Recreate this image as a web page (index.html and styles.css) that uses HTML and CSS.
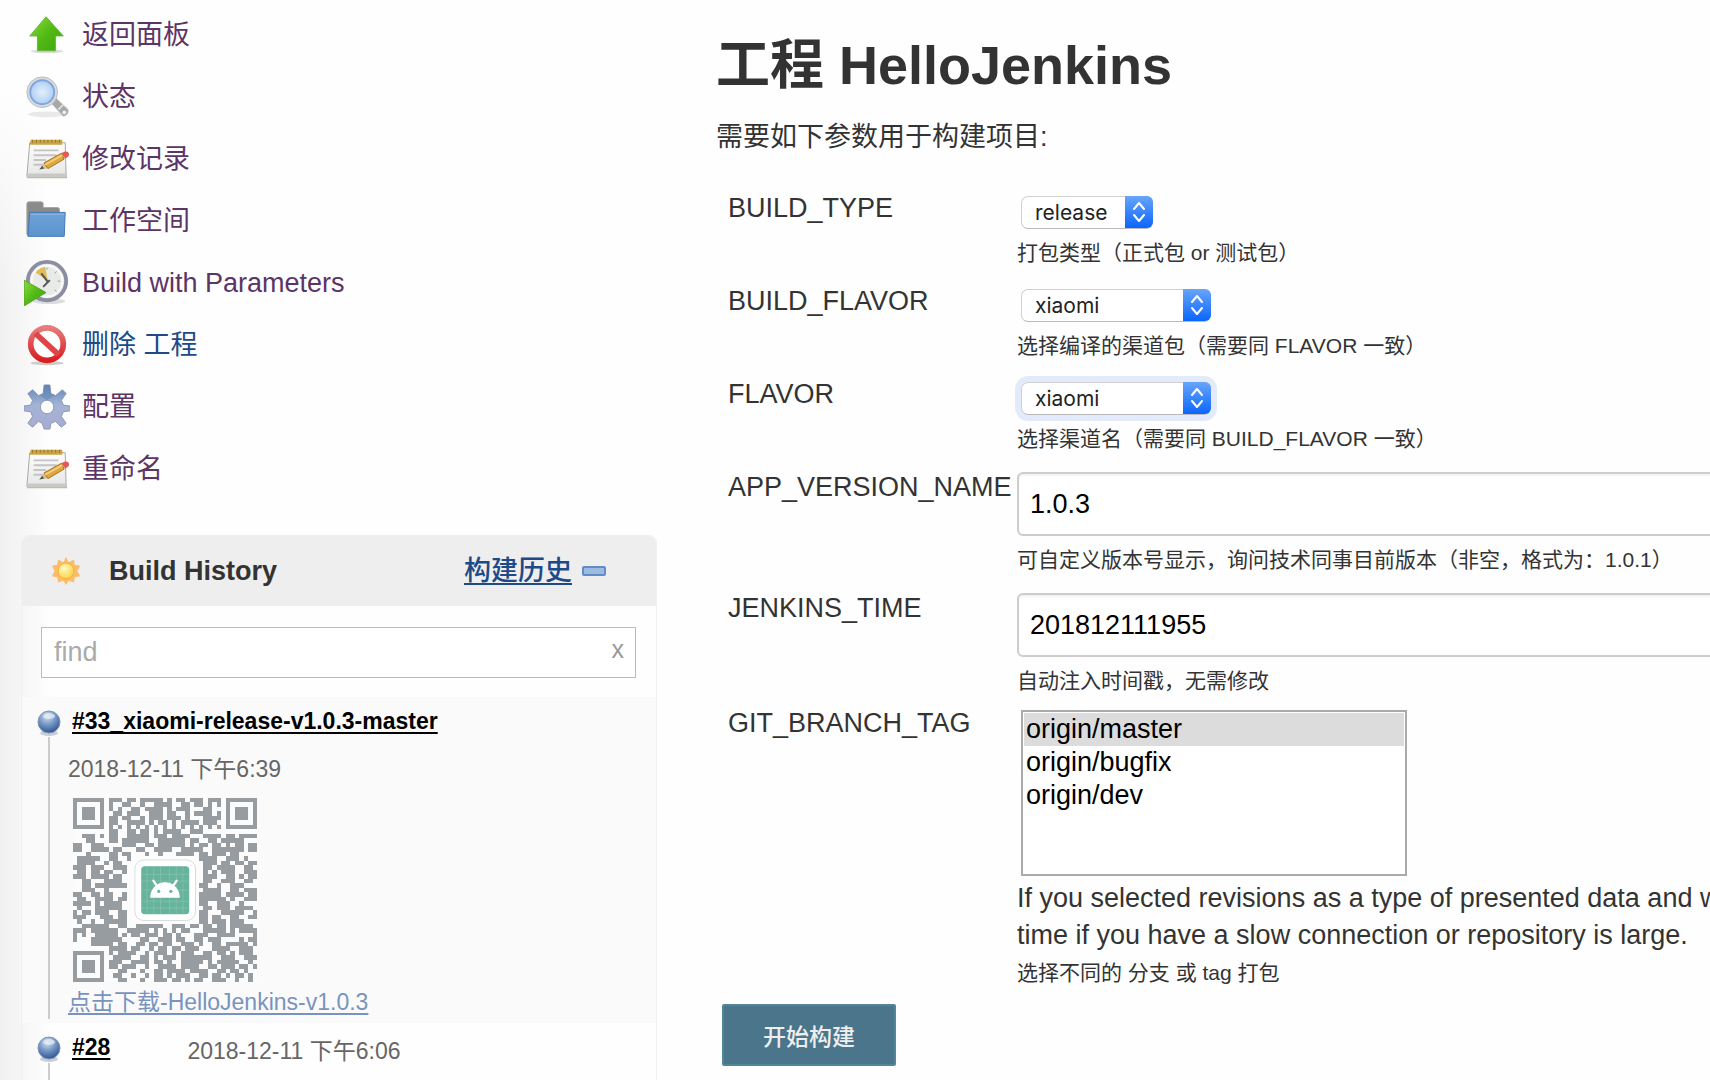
FILE: index.html
```html
<!DOCTYPE html>
<html lang="zh-CN">
<head>
  <meta charset="UTF-8" />
  <meta name="viewport" content="width=device-width, initial-scale=1.0"/>
  <title>HelloJenkins [Jenkins]</title>
  <link rel="stylesheet" href="styles.css">
</head>
<body>
  <svg class="defs" aria-hidden="true">
    <defs>
      <linearGradient id="green" x1="0" y1="0" x2="1" y2="1"><stop offset="0" stop-color="#8fdc3c"/><stop offset=".5" stop-color="#52ba16"/><stop offset="1" stop-color="#3fa30c"/></linearGradient>
      <linearGradient id="folder" x1="0" y1="0" x2="0" y2="1"><stop offset="0" stop-color="#6fa3d8"/><stop offset="1" stop-color="#5b93cd"/></linearGradient>
      <linearGradient id="red" x1="0" y1="0" x2="0" y2="1"><stop offset="0" stop-color="#e87b7b"/><stop offset="1" stop-color="#d81f22"/></linearGradient>
      <linearGradient id="gear" x1="0" y1="0" x2="0" y2="1"><stop offset="0" stop-color="#5f86b8"/><stop offset=".45" stop-color="#a3b3d6"/><stop offset="1" stop-color="#a9acd2"/></linearGradient>
      <linearGradient id="paper" x1="0" y1="0" x2="0" y2="1"><stop offset="0" stop-color="#fdfdfd"/><stop offset="1" stop-color="#e6e6e6"/></linearGradient>
      <radialGradient id="lens" cx=".5" cy=".5" r=".6"><stop offset="0" stop-color="#e3f0fc"/><stop offset="1" stop-color="#a5c8f0"/></radialGradient>
      <radialGradient id="orb" cx=".42" cy=".25" r=".75"><stop offset="0" stop-color="#d5e2f0"/><stop offset=".45" stop-color="#7f9fcb"/><stop offset="1" stop-color="#2f5594"/></radialGradient>
      <radialGradient id="sun" cx=".4" cy=".35" r=".7"><stop offset="0" stop-color="#fffac0"/><stop offset="1" stop-color="#fbd142"/></radialGradient>
      <symbol id="icon-notepad" viewBox="0 0 48 48">
        <path d="M3 44h42v-2H3z" fill="#b9b9b4"/>
        <path d="M6 7h37l1 35H3z" fill="url(#paper)" stroke="#a5a5a0"/>
        <path d="M3 39h41v4H3z" fill="#c9c9c4"/>
        <path d="M7 4h33v5H6z" fill="#c9a545"/>
        <path d="M9 4v3m4-3v3m4-3v3m4-3v3m4-3v3m4-3v3m4-3v3m4-3v3" stroke="#917429"/>
        <path d="M10 15h26M10 20h24M10 25h13M10 30h11" stroke="#c4c4c4" stroke-width="2"/>
        <path d="M16 35l5-7 4 6z" fill="#d8c193"/><path d="M16 35l3-4 2 3z" fill="#555"/>
        <path d="M21 28l18-10 3 6-17 10z" fill="#e0a73f" stroke="#9c7429"/>
        <path d="M22 30l18-10" stroke="#f6cf72" stroke-width="2"/>
        <path d="M39 18l3-1.500q5-1 5 3 0 2-4 4z" fill="#e35a55"/>
      </symbol>
      <symbol id="icon-orb" viewBox="0 0 26 28">
        <ellipse cx="13" cy="24" rx="9" ry="3" fill="#c9cdd5"/>
        <circle cx="13" cy="13" r="11" fill="url(#orb)" stroke="#8094b5"/>
        <ellipse cx="13" cy="7" rx="6" ry="3" fill="#e9f0f6" opacity=".7"/>
      </symbol>
    </defs>
  </svg>

  <div class="side-panel">
    <nav class="tasks">
      <a class="task" href="#">
        <svg class="task-icon" viewBox="0 0 48 48"><ellipse cx="24" cy="41" rx="17" ry="2" fill="#ddd"/><path d="M23 5L41 25h-8v15.500H14V25H6z" fill="url(#green)" stroke="#68b73a"/></svg>
        返回面板
      </a>
      <a class="task" href="#">
        <svg class="task-icon" viewBox="0 0 48 48"><ellipse cx="24" cy="42" rx="20" ry="3" fill="#e9e9e9"/><path d="M27 29l5-5 14 13q1 6-5 7z" fill="#a8a8a8" stroke="#c4c4c4"/><path d="M36 37l5-5" stroke="#ddd" stroke-width="2"/><circle cx="42" cy="40" r="2" fill="#eee"/><circle cx="19" cy="19" r="16" fill="#d7dbe0" stroke="#bbb"/><circle cx="19" cy="19" r="12.500" fill="url(#lens)" stroke="#7fa5df" stroke-width="2"/></svg>
        状态
      </a>
      <a class="task" href="#">
        <svg class="task-icon"><use href="#icon-notepad"/></svg>
        修改记录
      </a>
      <a class="task" href="#">
        <svg class="task-icon" viewBox="0 0 48 48"><path d="M3 38V6q0-2 2-2h13q2 0 2 2v4h15q2 0 2 2v22z" fill="#8a8a8a" stroke="#a5a5a5"/><path d="M6 15h37l-1 25H4z" fill="url(#folder)" stroke="#3f78b5"/><path d="M7 17h35" stroke="#8bb9e4"/></svg>
        工作空间
      </a>
      <a class="task" href="#">
        <svg class="task-icon" viewBox="0 0 48 48"><ellipse cx="26" cy="43" rx="17" ry="3" fill="#ddd"/><circle cx="24" cy="22" r="20" fill="#e9ebe8" stroke="#8b8da3" stroke-width="4"/><circle cx="24" cy="22" r="16" fill="none" stroke="#fafafa" stroke-width="2"/><path d="M24 8v2M38 22h-3M34 12l-2 2M34 33l-2-2" stroke="#999"/><path d="M12 13q4-5 10-6l3 15z" fill="#e2bc57"/><path d="M18 14l7 9-5 5M25 23l2-2" fill="none" stroke="#555" stroke-width="2"/><path d="M0 21l23 13L0 48z" fill="url(#green)" stroke="#5aa12f"/></svg>
        Build with Parameters
      </a>
      <a class="task task-new" href="#">
        <svg class="task-icon" viewBox="0 0 48 48"><ellipse cx="24" cy="43" rx="17" ry="2" fill="#ccc"/><circle cx="24" cy="23" r="17" fill="#fff" stroke="url(#red)" stroke-width="6"/><path d="M12 12l24 22" stroke="#df4547" stroke-width="6"/></svg>
        删除 工程
      </a>
      <a class="task" href="#">
        <svg class="task-icon" viewBox="0 0 48 48"><path fill="url(#gear)" stroke="#8795b5" fill-rule="evenodd" d="M21 1h6l1 9 5 2 7-6 4 4-5 7 2 5 7 1v5l-7 1-2 5 5 7-5 4-6-6-5 2-1 6h-6l-2-6-4-2-6 6-5-4 5-7-2-5-7-1v-5l7-1 2-5-5-7 5-4 6 6 5-2zM24 17a7 7 0 1 0 .1 0z"/><path d="M21 1h6l1 9 4 2-8 5-7-5 3-2z" fill="#5d83b3" opacity=".5"/></svg>
        配置
      </a>
      <a class="task" href="#">
        <svg class="task-icon"><use href="#icon-notepad"/></svg>
        重命名
      </a>
    </nav>

    <section class="history">
      <header class="history-header">
        <svg class="sun" viewBox="0 0 34 34"><path d="M17 1l3 6 6-3 1 6 6 1-3 6 3 6-6 1-1 6-6-2-3 5-3-5-6 2-1-6-6-1 3-6-3-6 6-1 1-6 6 3z" fill="#fbbd68"/><circle cx="17" cy="17" r="9" fill="url(#sun)" stroke="#f5a93c"/></svg>
        <h2>Build History</h2>
        <a class="trend" href="#">构建历史</a>
        <button class="collapse" type="button" aria-label="collapse"></button>
      </header>
      <div class="search">
        <input type="text" class="search-input" placeholder="find" aria-label="find">
        <button class="search-clear" type="button">x</button>
      </div>
      <div class="build build-latest">
        <div class="build-rail"><svg class="orb"><use href="#icon-orb"/></svg></div>
        <div class="build-info">
          <a class="build-name" href="#">#33_xiaomi-release-v1.0.3-master</a>
          <span class="build-date">2018-12-11 下午6:39</span>
          <svg class="qr" viewBox="0 0 41 41" role="img" aria-label="QR">
            <path id="qr-path" fill="#979ca0" shape-rendering="crispEdges"/>
            <rect x="13" y="13" width="15" height="15" rx="2" fill="#fcfcfc"/>
            <rect x="13.800" y="13.800" width="13.500" height="13.500" rx="2" fill="#fff" stroke="#c9cccc" stroke-width=".15"/>
            <rect x="15.200" y="15.200" width="10.700" height="10.700" rx=".8" fill="#67b39c"/>
            <path d="M16.500 15.200v10.700M18 15.200v10.700M19.500 15.200v10.700M21.500 15.200v10.700M23 15.200v10.700M24.500 15.200v10.700M15.200 17h10.700M15.200 18.500h10.700M15.200 20.500h10.700M15.200 23h10.700M15.200 24.500h10.700" stroke="#8fc9b8" stroke-width=".12"/>
            <path d="M17.200 22.200a3.300 3.400 0 0 1 6.600 0z" fill="#fff"/>
            <path d="M18.700 19.600l-.8-1.200M22.300 19.600l.8-1.200" stroke="#fff" stroke-width=".5" stroke-linecap="round"/>
            <circle cx="19.100" cy="20.800" r=".35" fill="#67b39c"/><circle cx="21.800" cy="20.800" r=".35" fill="#67b39c"/>
          </svg>
          <a class="download" href="#">点击下载-HelloJenkins-v1.0.3</a>
        </div>
      </div>
      <div class="build">
        <div class="build-rail"><svg class="orb"><use href="#icon-orb"/></svg></div>
        <div class="build-info build-inline">
          <a class="build-name" href="#">#28</a>
          <span class="build-date">2018-12-11 下午6:06</span>
        </div>
      </div>
    </section>
  </div>

  <main class="main-panel">
    <h1>工程 HelloJenkins</h1>
    <p class="intro">需要如下参数用于构建项目:</p>
    <form class="params">
      <div class="param">
        <label for="build-type">BUILD_TYPE</label>
        <div class="setting">
          <div class="dropdown dropdown-short">
            <select id="build-type"><option>release</option></select>
            <svg class="arrows" viewBox="0 0 28 32"><path d="M9 13l5-6 5 6M9 19l5 6 5-6"/></svg>
          </div>
          <p class="description">打包类型（正式包 or 测试包）</p>
        </div>
      </div>
      <div class="param">
        <label for="build-flavor">BUILD_FLAVOR</label>
        <div class="setting">
          <div class="dropdown">
            <select id="build-flavor"><option>xiaomi</option></select>
            <svg class="arrows" viewBox="0 0 28 32"><path d="M9 13l5-6 5 6M9 19l5 6 5-6"/></svg>
          </div>
          <p class="description">选择编译的渠道包（需要同 FLAVOR 一致）</p>
        </div>
      </div>
      <div class="param">
        <label for="flavor">FLAVOR</label>
        <div class="setting">
          <div class="dropdown dropdown-focus">
            <select id="flavor"><option>xiaomi</option></select>
            <svg class="arrows" viewBox="0 0 28 32"><path d="M9 13l5-6 5 6M9 19l5 6 5-6"/></svg>
          </div>
          <p class="description">选择渠道名（需要同 BUILD_FLAVOR 一致）</p>
        </div>
      </div>
      <div class="param">
        <label for="app-version">APP_VERSION_NAME</label>
        <div class="setting">
          <input type="text" id="app-version" value="1.0.3">
          <p class="description">可自定义版本号显示，询问技术同事目前版本（非空，格式为：1.0.1）</p>
        </div>
      </div>
      <div class="param param-tight">
        <label for="jenkins-time">JENKINS_TIME</label>
        <div class="setting">
          <input type="text" id="jenkins-time" value="201812111955">
          <p class="description">自动注入时间戳，无需修改</p>
        </div>
      </div>
      <div class="param param-tight">
        <label for="git-branch">GIT_BRANCH_TAG</label>
        <div class="setting">
          <select id="git-branch" class="listbox" size="5">
            <option selected>origin/master</option>
            <option>origin/bugfix</option>
            <option>origin/dev</option>
          </select>
          <p class="note">If you selected revisions as a type of presented data and w<br>time if you have a slow connection or repository is large.</p>
          <p class="description">选择不同的 分支 或 tag 打包</p>
        </div>
      </div>
      <button class="submit" type="button">开始构建</button>
    </form>
  </main>
  <script src="script.js"></script>
</body>
</html>
```
FILE: styles.css
```css
* { box-sizing: border-box; margin: 0; padding: 0; }
body { display: flex; align-items: flex-start; height: 100vh; overflow: hidden; font-family: "Liberation Sans", "Noto Sans CJK SC", sans-serif; font-size: 27px; line-height: 36px; color: #333; background-color: #fefefe; }
input, button, select { font-family: inherit; font-size: inherit; color: inherit; }
.defs { position: absolute; width: 0; height: 0; }

.side-panel { flex: none; width: 657px; min-height: 100vh; padding: 4px 0 0 21px; background: linear-gradient(to bottom, #fefefe 90px, rgba(254,254,254,0) 300px), linear-gradient(to right, #f0f0f0, #fefefe 52px); }
.tasks { margin-bottom: 35px; }
.task { display: flex; align-items: center; gap: 12px; height: 62px; padding-left: 3px; color: #5c3566; text-decoration: none; }
.task-new { color: #204a87; }
.task-icon { width: 46px; height: 46px; fill: none; }

.history { border: 1px solid #f0f0f0; border-radius: 8px 8px 0 0; }
.history-header { display: flex; align-items: center; height: 70px; padding: 0 50px 0 29px; background-color: #eee; border-radius: 8px 8px 0 0; }
.sun { width: 30px; height: 30px; margin-right: 28px; }
h2 { flex: 1; font-size: 27px; }
.trend { font-weight: 500; color: #204a87; text-decoration-thickness: 2px; text-underline-offset: 3px; }
.collapse { width: 24px; height: 10px; margin-left: 10px; border: 2px solid #5d8cc9; border-radius: 2px; background-color: #9dbbdf; }
.search { position: relative; padding: 21px 20px 19px 19px; }
.search-input { display: block; width: 100%; height: 51px; padding: 0 12px; border: 1px solid #bbb; background-color: #fff; }
.search-input::placeholder { color: #aaa; }
.search-clear { position: absolute; top: 25px; right: 32px; border: none; background: none; font-size: 25px; line-height: 36px; color: #999; }

.build { display: flex; height: 60px; }
.build-latest { height: 326px; background-color: #fafafa; }
.build-rail { display: flex; flex-direction: column; align-items: center; width: 28px; margin: 12px 5px 0 13px; }
.build-rail::after { content: ""; flex: 1; width: 2px; background-color: #ccc; }
.build-latest .build-rail { margin-bottom: 4px; }
.orb { flex: none; width: 26px; height: 28px; }
.build-info { display: flex; flex-direction: column; align-items: flex-start; padding-top: 8px; font-size: 23px; line-height: 32px; }
.build-name { padding-left: 4px; font-weight: bold; color: #000; text-underline-offset: 3px; }
.build-date { margin-top: 16px; color: #666; }
.qr { width: 184px; height: 184px; margin: 13px 0 4px 5px; background-color: #fcfcfc; }
.download { color: #7993bd; text-underline-offset: 3px; }
.build-inline { flex-direction: row; gap: 77px; }
.build-inline .build-date { margin-top: 4px; }

.main-panel { flex: 1; min-width: 0; padding: 33px 0 0 59px; }
h1 { font-size: 54px; line-height: 64px; }
.intro { margin: 22px 0 38px; }
/* text boxes run past the right edge of the window */
.params { margin-right: -40px; }
.param { display: flex; margin-bottom: 18px; padding-left: 12px; }
.param-tight { margin-bottom: 12px; }
.param label { flex: none; width: 289px; line-height: 30px; white-space: nowrap; }
.setting { flex: 1; }
.description { margin-top: 9px; font-size: 21px; line-height: 30px; white-space: nowrap; }
.setting input { display: block; width: 100%; height: 64px; padding: 0 11px; border: 2px solid #ccc; border-radius: 6px; background-color: #fff; box-shadow: inset 0 2px 2px #f3f3f3; color: #000; }
.dropdown { position: relative; width: 190px; height: 33px; margin: 3px 0 0 4px; border-radius: 7px; }
.dropdown-short { width: 132px; }
.dropdown-focus { box-shadow: 0 0 0 6px #e3eafb; }
.dropdown select { display: block; width: 100%; height: 33px; padding-left: 13px; appearance: none; border: 1px solid #d0d0d0; border-bottom-color: #bbb; border-radius: 7px; background-color: #fff; font-family: Inter, sans-serif; font-size: 21px; color: #222; }
.arrows { position: absolute; top: 0; right: 0; width: 28px; height: 32px; border-radius: 0 6px 6px 0; background: linear-gradient(#68a5fb, #0a66fc); fill: none; stroke: #fff; stroke-width: 2px; stroke-linecap: round; stroke-linejoin: round; pointer-events: none; }
.listbox { display: block; width: 386px; height: 166px; margin: 2px 0 0 4px; padding: 1px; appearance: none; border: 2px solid #aaa; border-radius: 0; background-color: #fff; color: #000; overflow: hidden; }
.listbox option { height: 33px; padding: 1px 2px; }
.listbox option:checked { background: linear-gradient(#dcdcdc, #dcdcdc); color: #000; }
.note { margin-top: 4px; line-height: 37px; white-space: nowrap; }
.note + .description { margin-top: 4px; }
.submit { width: 174px; height: 62px; margin: 4px 0 0 6px; border: 2px solid #53859a; border-radius: 2px; background-color: #4b758b; font-size: 23px; font-weight: 500; color: #eee; }
```
FILE: script.js
```js
// one string per row, # is a dark module
const rows = [
  '#######.###.##.#####.#.##.###.###.#######',
  '#.....#.#..##..#..####..##.##.#.#.#.....#',
  '#.###.#.#.#..##.####.#.###...##...#.###.#',
  '#.###.#..##.###..###.##..#.####.#.#.###.#',
  '#.###.#.##.##..#.###.###.#...####.#.###.#',
  '#.....#.##..####.#.##.#.####.###..#.....#',
  '#######.#.#.#.#.#.#.#.#.#.#.#.#.#.#######',
  '........##..##.##.#.####..###............',
  '..###.#.##..#####.###.####...####.##.####',
  '...##...##.######..######.##..##.#####...',
  '##..###....###..##.######.#.##.##.#.##.##',
  '##..####.##...##..####..#####..#######.##',
  '...#....##.##...#..#...####.##.###.##....',
  '.#####..##..#...............####..###.#..',
  '.####..#.##..................###.##.##.##',
  '###.###..###.................##.####..##.',
  '.##.##.##..#.................#.#.###..###',
  '###.####.##..................###..##.#.##',
  '..##...####..................##..###..##.',
  '..##.#######................##..#..###...',
  '..###..#.....................####..##.###',
  '##..##.##..#................#####.####.##',
  '.##..####.##................######.#..###',
  '####.#.####.................##..###..#...',
  '.#...######..................##.###.####.',
  '#.##.###..##................##...#####..#',
  '###...###.##................##.##..##..##',
  '.#..#..#####................##.###.###...',
  '..######..##..######..###.##.##.##.#####.',
  '###.######..#####.#.#.#.##...#####.#.####',
  '#.#..#####.#.##.###.##.#...###..####....#',
  '#...#######....##..###.##..##.###....#.##',
  '....#####.##..##.##.##..###.#..##.#####.#',
  '........####.##..#.##.##.###...####..###.',
  '#######.#.####..#.###.#.###..##.##.#.###.',
  '#.....#..####..##.#.###.#######..###..###',
  '#.###.#.###..####.##.#..#####.#.#####..#.',
  '#.###.#.##.###..#..####.####..##.###.##.#',
  '#.###.#...##...#..##.####.####..##.##.#..',
  '#.....#..##..#..#.##.#.###..##.##.#.##.#.',
  '#######...##...#..###.##.#.##..###..#..#.'
];

let d = '';
rows.forEach((row, y) => {
  for (let x = 0; x < row.length; x++) {
    if (row[x] === '#') d += `M${x} ${y}h1v1h-1z`;
  }
});
document.getElementById('qr-path').setAttribute('d', d);
```
